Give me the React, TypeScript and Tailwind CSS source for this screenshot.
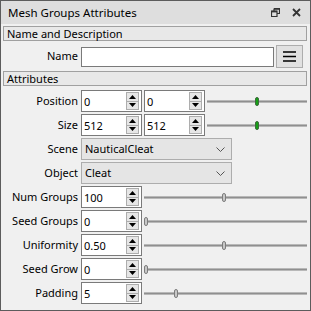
import React from "react";

type SliderProps = { pos: number; green?: boolean };

function Slider({ pos, green }: SliderProps) {
  return (
    <div className="relative flex h-[22px] min-w-0 flex-1 items-center">
      <div className="h-[3px] w-full border-y border-[#b8b8b8] bg-[#8f8f8f]" />
      <div
        className={`absolute top-[7px] h-[9px] w-[4px] rounded-[2px] border ${
          green ? "border-[#3d6b3d] bg-[#16a016]" : "border-[#7d7d7d] bg-[#c8c8c8]"
        }`}
        style={{ left: `${pos}px` }}
      />
    </div>
  );
}

function SpinBox({ value }: { value: string }) {
  return (
    <div className="flex h-[22px] w-[61px] shrink-0 items-center border border-[#7a7a7a] bg-white">
      <span className="flex-1 pl-[2px] leading-none text-black">{value}</span>
      <div className="mr-[2px] flex h-[18px] w-[13px] flex-col border border-[#adadad]">
        <div className="flex flex-1 items-center justify-center border-b border-[#adadad] bg-[#e6e6e6]">
          <svg width="7" height="4" viewBox="0 0 7 4">
            <path d="M3.5 0 L7 4 L0 4 Z" fill="#000" />
          </svg>
        </div>
        <div className="flex flex-1 items-center justify-center bg-[#e6e6e6]">
          <svg width="7" height="4" viewBox="0 0 7 4">
            <path d="M0 0 L7 0 L3.5 4 Z" fill="#000" />
          </svg>
        </div>
      </div>
    </div>
  );
}

function Combo({ value }: { value: string }) {
  return (
    <div className="flex h-[22px] w-[151px] shrink-0 items-center justify-between border border-[#adadad] bg-[#e5e5e5] pl-[3px] pr-[6px]">
      <span className="text-black">{value}</span>
      <svg width="9" height="5" viewBox="0 0 9 5">
        <path d="M0.5 0.5 L4.5 4.5 L8.5 0.5" fill="none" stroke="#555" strokeWidth="1" />
      </svg>
    </div>
  );
}

function Row({ label, children }: { label: string; children: React.ReactNode }) {
  return (
    <div className="grid h-[22px] grid-cols-[80px_226px] items-center">
      <div className="pr-[3px] text-right whitespace-nowrap text-black">{label}</div>
      <div className="flex items-center gap-[2px]">{children}</div>
    </div>
  );
}

function SectionHeader({ title }: { title: string }) {
  return (
    <div className="mx-[2px] flex h-[15px] w-[304px] items-center border border-[#a0a0a0] bg-[#e8e8e8] pl-[3px] leading-none text-black">
      {title}
    </div>
  );
}

export default function App() {
  return (
    <div className="flex h-[311px] w-[311px] flex-col border border-[#5c5c5c] bg-[#f0f0f0] font-['Noto_Sans',sans-serif] text-[11px]">
      <div className="flex h-[23px] shrink-0 items-center bg-[#dedede] pl-[7px] pr-[9px]">
        <span className="flex-1 text-[11.5px] text-black">Mesh Groups Attributes</span>
        <svg width="9" height="9" viewBox="0 0 9 9" className="mr-[12px]">
          <path d="M3 0.5 H8.5 V5.5 H6.5 M0.5 3 H6 V8.5 H0.5 Z M3 0.5 V3" fill="none" stroke="#333" strokeWidth="1.2" />
          <path d="M3 1 H8.5" stroke="#333" strokeWidth="1.6" />
          <path d="M0.5 3.6 H6" stroke="#333" strokeWidth="1.6" />
        </svg>
        <svg width="9" height="9" viewBox="0 0 9 9">
          <path d="M1 1 L8 8 M8 1 L1 8" stroke="#333" strokeWidth="1.8" />
        </svg>
      </div>

      <div className="mt-[2px]">
        <SectionHeader title="Name and Description" />
      </div>

      <div className="mt-[4px] grid h-[23px] grid-cols-[80px_193px_27px] items-center">
        <div className="pr-[3px] text-right text-black">Name</div>
        <div className="h-[20px] border border-[#7a7a7a] bg-white" />
        <div className="ml-[2px] flex h-[23px] w-[27px] items-center justify-center border border-[#adadad] bg-[#e1e1e1]">
          <svg width="13" height="11" viewBox="0 0 13 11">
            <path d="M0 1 H13 M0 5.5 H13 M0 10 H13" stroke="#000" strokeWidth="1.6" />
          </svg>
        </div>
      </div>

      <div className="mt-[3px]">
        <SectionHeader title="Attributes" />
      </div>

      <div className="mt-[4px] flex flex-col gap-[2px]">
        <Row label="Position">
          <SpinBox value="0" />
          <SpinBox value="0" />
          <Slider pos={48} green />
        </Row>
        <Row label="Size">
          <SpinBox value="512" />
          <SpinBox value="512" />
          <Slider pos={48} green />
        </Row>
        <Row label="Scene">
          <Combo value="NauticalCleat" />
        </Row>
        <Row label="Object">
          <Combo value="Cleat" />
        </Row>
        <Row label="Num Groups">
          <SpinBox value="100" />
          <Slider pos={78} />
        </Row>
        <Row label="Seed Groups">
          <SpinBox value="0" />
          <Slider pos={0} />
        </Row>
        <Row label="Uniformity">
          <SpinBox value="0.50" />
          <Slider pos={78} />
        </Row>
        <Row label="Seed Grow">
          <SpinBox value="0" />
          <Slider pos={0} />
        </Row>
        <Row label="Padding">
          <SpinBox value="5" />
          <Slider pos={30} />
        </Row>
      </div>
    </div>
  );
}
